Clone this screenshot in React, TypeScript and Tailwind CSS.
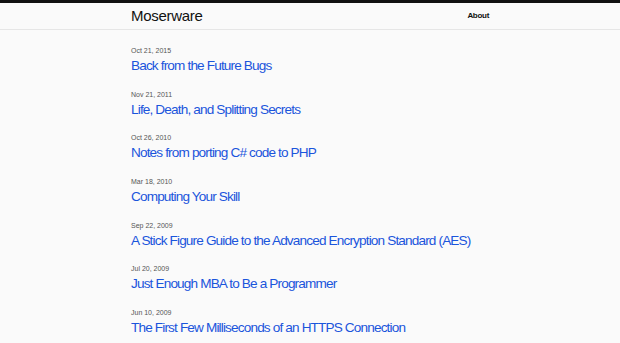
const posts = [
  { date: 'Oct 21, 2015', title: 'Back from the Future Bugs' },
  { date: 'Nov 21, 2011', title: 'Life, Death, and Splitting Secrets' },
  { date: 'Oct 26, 2010', title: 'Notes from porting C# code to PHP' },
  { date: 'Mar 18, 2010', title: 'Computing Your Skill' },
  { date: 'Sep 22, 2009', title: 'A Stick Figure Guide to the Advanced Encryption Standard (AES)' },
  { date: 'Jul 20, 2009', title: 'Just Enough MBA to Be a Programmer' },
  { date: 'Jun 10, 2009', title: 'The First Few Milliseconds of an HTTPS Connection' },
];

export default function App() {
  return (
    <div className="min-h-screen bg-[#fafafa] font-['Liberation_Sans',Arial,sans-serif]">
      <div className="h-[3px] bg-[#111]" />
      {/* Header */}
      <header className="h-[27px] border-b border-[#e6e6e6]">
        <div className="w-[358px] mx-auto h-full flex items-center justify-between">
          <a className="text-[15px] text-[#111] tracking-[-0.3px]">Moserware</a>
          <a className="text-[8px] font-bold text-[#111] tracking-[-0.3px]">About</a>
        </div>
      </header>

      {/* Posts */}
      <div className="w-[358px] mx-auto pt-[16px]">
        {posts.map(post => (
          <div key={post.title} className="h-[43.7px]">
            <div className="text-[7px] text-[#555] leading-[10px]">{post.date}</div>
            <a className="block text-[13.6px] text-[#1a55dc] leading-[19px] tracking-[-0.85px] whitespace-nowrap">
              {post.title}
            </a>
          </div>
        ))}
      </div>
    </div>
  );
}
